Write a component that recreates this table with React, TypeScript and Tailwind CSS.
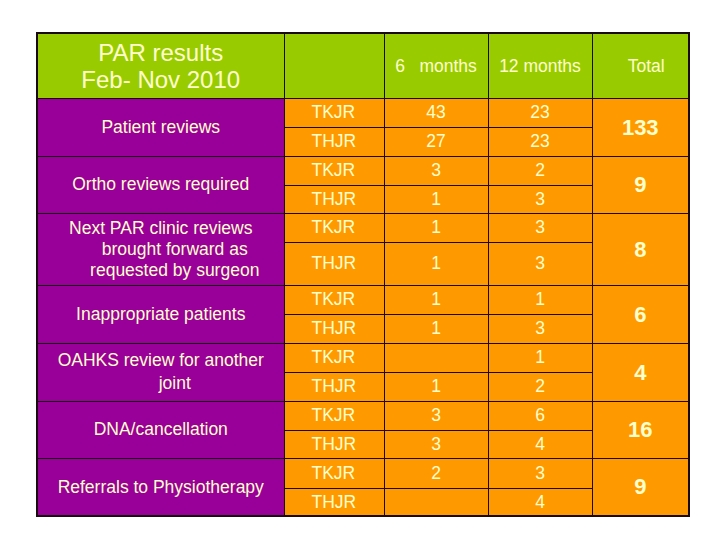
import React from 'react';

type Group = {
  label: React.ReactNode;
  total: string;
  rows: { name: string; six: string; twelve: string; h: string }[];
};

const groups: Group[] = [
  {
    label: 'Patient reviews',
    total: '133',
    rows: [
      { name: 'TKJR', six: '43', twelve: '23', h: 'h-[29px]' },
      { name: 'THJR', six: '27', twelve: '23', h: 'h-[29px]' },
    ],
  },
  {
    label: 'Ortho reviews required',
    total: '9',
    rows: [
      { name: 'TKJR', six: '3', twelve: '2', h: 'h-[29px]' },
      { name: 'THJR', six: '1', twelve: '3', h: 'h-[28px]' },
    ],
  },
  {
    label: (
      <div className="leading-[21px]">
        <span className="block">Next PAR clinic reviews</span>
        <span className="block pl-[28px]">brought forward as</span>
        <span className="block pl-[28px]">requested by surgeon</span>
      </div>
    ),
    total: '8',
    rows: [
      { name: 'TKJR', six: '1', twelve: '3', h: 'h-[29px]' },
      { name: 'THJR', six: '1', twelve: '3', h: 'h-[43px]' },
    ],
  },
  {
    label: 'Inappropriate patients',
    total: '6',
    rows: [
      { name: 'TKJR', six: '1', twelve: '1', h: 'h-[29px]' },
      { name: 'THJR', six: '1', twelve: '3', h: 'h-[29px]' },
    ],
  },
  {
    label: (
      <div className="leading-[23px]">
        <span className="block">OAHKS review for another</span>
        <span className="block pl-[28px]">joint</span>
      </div>
    ),
    total: '4',
    rows: [
      { name: 'TKJR', six: '', twelve: '1', h: 'h-[29px]' },
      { name: 'THJR', six: '1', twelve: '2', h: 'h-[29px]' },
    ],
  },
  {
    label: 'DNA/cancellation',
    total: '16',
    rows: [
      { name: 'TKJR', six: '3', twelve: '6', h: 'h-[29px]' },
      { name: 'THJR', six: '3', twelve: '4', h: 'h-[28px]' },
    ],
  },
  {
    label: 'Referrals to Physiotherapy',
    total: '9',
    rows: [
      { name: 'TKJR', six: '2', twelve: '3', h: 'h-[30px]' },
      { name: 'THJR', six: '', twelve: '4', h: 'h-[28px]' },
    ],
  },
];

const cell = 'border border-[#1a0a10] p-0';

export default function App() {
  return (
    <div className="w-[720px] h-[540px] bg-white pt-[32px] pl-[36px] font-['Liberation_Sans',Arial,sans-serif] text-[#ffffcc] text-[17.5px]">
      <table className="table-fixed border-collapse border-2 border-[#1a0a10]">
        <colgroup>
          <col className="w-[247px]" />
          <col className="w-[100px]" />
          <col className="w-[104px]" />
          <col className="w-[104px]" />
          <col className="w-[97px]" />
        </colgroup>
        <thead>
          <tr className="h-[65px] bg-[#99cc00]">
            <th className={`${cell} font-normal text-[24px] leading-[27px] text-center`}>
              PAR results
              <br />
              Feb- Nov 2010
            </th>
            <th className={cell}></th>
            <th className={`${cell} font-normal text-center whitespace-pre`}>6   months</th>
            <th className={`${cell} font-normal text-center`}>12 months</th>
            <th className={`${cell} font-normal text-center pl-[12px]`}>Total</th>
          </tr>
        </thead>
        <tbody>
          {groups.map((g, gi) =>
            g.rows.map((r, ri) => (
              <tr key={`${gi}-${ri}`} className={`${r.h} bg-[#ff9900]`}>
                {ri === 0 && (
                  <td rowSpan={2} className={`${cell} bg-[#990099] text-center align-middle`}>
                    {g.label}
                  </td>
                )}
                <td className={`${cell} pl-[27px] text-left align-middle`}>{r.name}</td>
                <td className={`${cell} text-center align-middle`}>{r.six}</td>
                <td className={`${cell} text-center align-middle`}>{r.twelve}</td>
                {ri === 0 && (
                  <td rowSpan={2} className={`${cell} text-center align-middle font-bold text-[22px]`}>
                    {g.total}
                  </td>
                )}
              </tr>
            ))
          )}
        </tbody>
      </table>
    </div>
  );
}
